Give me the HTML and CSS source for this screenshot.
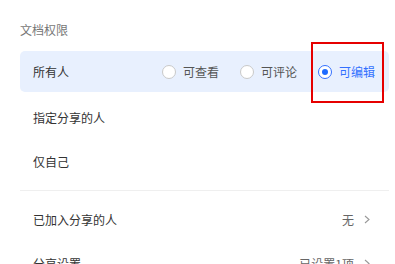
FILE: index.html
```html
<!DOCTYPE html>
<html lang="zh">
<head>
<meta charset="utf-8">
<link rel="stylesheet" href="styles.css">
</head>
<body>
<div class="panel">
  <div class="title">文档权限</div>
  <div class="row row-active">
    <span class="label">所有人</span>
    <div class="radios">
      <span class="opt"><span class="radio"></span><span class="opt-text">可查看</span></span>
      <span class="opt"><span class="radio"></span><span class="opt-text">可评论</span></span>
      <span class="opt opt-on"><span class="radio radio-on"></span><span class="opt-text">可编辑</span></span>
    </div>
  </div>
  <div class="row"><span class="label">指定分享的人</span></div>
  <div class="row"><span class="label">仅自己</span></div>
  <div class="divider"></div>
  <div class="row">
    <span class="label">已加入分享的人</span>
    <span class="value">无<svg class="chev" width="6" height="9" viewBox="0 0 6 9"><polyline points="1,1 5,4.5 1,8" fill="none" stroke="#999" stroke-width="1.1"/></svg></span>
  </div>
  <div class="row">
    <span class="label">分享设置</span>
    <span class="value">已设置1项<svg class="chev" width="6" height="9" viewBox="0 0 6 9"><polyline points="1,1 5,4.5 1,8" fill="none" stroke="#999" stroke-width="1.1"/></svg></span>
  </div>
  <div class="highlight-box"></div>
</div>
</body>
</html>
```

FILE: styles.css
```css
html, body {
  margin: 0;
  padding: 0;
  background: #fff;
  overflow: hidden;
}
body {
  font-family: "Noto Sans CJK SC", "Noto Sans", sans-serif;
  font-size: 12px;
  color: #333;
}
.panel {
  position: relative;
  width: 369px;
  padding: 20px 0 0 20px;
}
.title {
  height: 20px;
  line-height: 20px;
  color: #777;
  margin-bottom: 11px;
}
.row {
  display: flex;
  align-items: center;
  justify-content: space-between;
  height: 44px;
  padding: 0 19px 0 13px;
}
.row-active {
  height: 41px;
  margin-bottom: 3px;
  background: #e8f0fe;
  border-radius: 5px;
  padding-right: 14px;
}
.label {
  color: #333;
}
.radios {
  display: flex;
  gap: 21px;
}
.opt {
  display: flex;
  align-items: center;
  gap: 7px;
  color: #555;
}
.opt-on {
  color: #3370ff;
}
.radio {
  box-sizing: border-box;
  width: 14px;
  height: 14px;
  border-radius: 50%;
  border: 1px solid #c9c9c9;
  background: #fff;
}
.radio-on {
  border-color: #3370ff;
  position: relative;
}
.radio-on::after {
  content: "";
  position: absolute;
  left: 3px;
  top: 3px;
  width: 6px;
  height: 6px;
  border-radius: 50%;
  background: #1f6bff;
}
.divider {
  height: 1px;
  background: #efefef;
  margin: 7px 0 6px;
}
.value {
  display: flex;
  align-items: center;
  gap: 10px;
  color: #666;
}
.chev {
  display: block;
}
.highlight-box {
  position: absolute;
  left: 311px;
  top: 42px;
  width: 73px;
  height: 61px;
  box-sizing: border-box;
  border: 2px solid #e60000;
}
```
